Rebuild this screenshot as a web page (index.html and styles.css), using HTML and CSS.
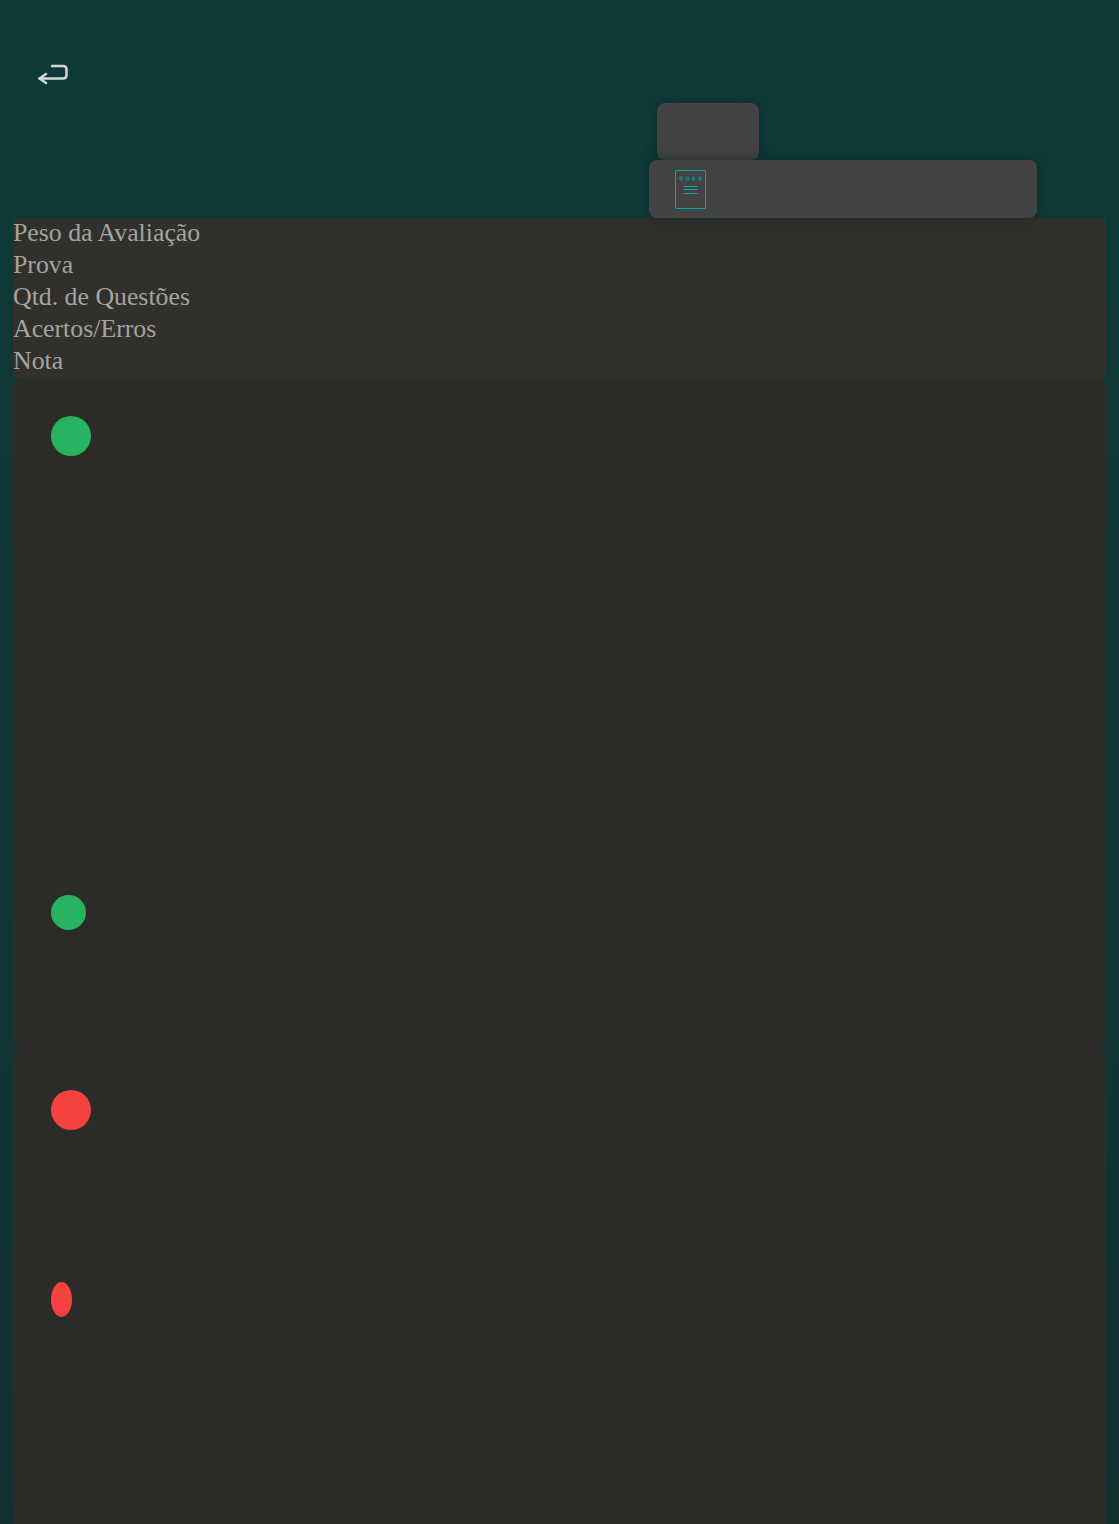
FILE: index.html
```html
<!DOCTYPE html>
<html lang="pt">
<head>
<meta charset="utf-8">
<title>Notas</title>
<link rel="stylesheet" href="styles.css">
</head>
<body>
<main class="page">
  <header class="top">
    <button class="back" aria-label="Voltar">
      <svg width="32" height="24" viewBox="0 0 32 24" fill="none" stroke="#d4d8d8" stroke-width="2.5" stroke-linecap="round" stroke-linejoin="round">
        <path d="M15 4H26C28.2 4 29.5 5.3 29.5 7.5V13C29.5 15.2 28.2 16.5 26 16.5H2.5"/>
        <path d="M9 12L2.5 16.5L9 21"/>
      </svg>
    </button>
    <div class="tabs">
      <div class="tab-small"></div>
      <div class="tab-wide">
        <svg width="31" height="39" viewBox="0 0 31 39" fill="none" stroke="#05a8ab" stroke-width="1">
          <rect x="0.5" y="0.5" width="30" height="38" rx="0.5"/>
          <ellipse cx="6" cy="8.5" rx="1.3" ry="1.6"/>
          <ellipse cx="12.5" cy="8.5" rx="1.3" ry="1.6"/>
          <ellipse cx="18.5" cy="8.5" rx="1.3" ry="1.6"/>
          <ellipse cx="25" cy="8.5" rx="1.3" ry="1.6"/>
          <path d="M8.5 16.5H22.5M8.5 19.5H22.5M8.5 23.5H22.5"/>
        </svg>
      </div>
    </div>
  </header>
  <section class="table-head">
    <div>Peso da Avaliação</div>
    <div>Prova</div>
    <div>Qtd. de Questões</div>
    <div>Acertos/Erros</div>
    <div>Nota</div>
  </section>
  <section class="card card-first">
    <span class="dot green dot-lg"></span>
    <span class="dot green dot-md gap-a"></span>
  </section>
  <section class="card card-second">
    <span class="dot red dot-lg"></span>
    <span class="dot red dot-narrow gap-b"></span>
  </section>
</main>
</body>
</html>
```
FILE: styles.css
```css
* { box-sizing: border-box; }
html, body { margin: 0; height: 1524px; overflow: hidden; }
body {
  background: linear-gradient(180deg, #0e3a3a 0%, #13302f 100%);
  font-family: "Liberation Serif", "Times New Roman", serif;
}
.page { padding: 0 13px; height: 1524px; overflow: hidden; }
.top { height: 218px; display: flex; position: relative; }
.back {
  width: 32px; height: 24px; margin: 62px 0 0 24px; padding: 0;
  background: none; border: 0; display: block;
}
.tabs {
  margin-left: auto; margin-right: 69px; width: 388px; padding-top: 103px;
  display: flex; flex-direction: column; align-items: flex-start;
}
.tab-small, .tab-wide {
  background: #434343; border-radius: 8px;
  box-shadow: 0 0 12px rgba(10, 35, 35, .6);
}
.tab-small { width: 102px; height: 57px; margin-left: 8px; }
.tab-wide {
  width: 388px; height: 58px; padding: 10px 0 0 26px; position: relative;
}
.table-head {
  height: 159px; background: #31302c; color: #a4a4a0;
  font-size: 25.8px; line-height: 32px;
}
.table-head div { height: 32px; position: relative; top: -1px; }
.card {
  background: #2b2b27; border-radius: 12px;
  padding: 39px 38px 0; display: flex; flex-direction: column; align-items: flex-start;
}
.card-first { height: 673px; }
.card-second { height: 600px; padding-top: 40px; }
.dot { display: block; border-radius: 50%; flex: none; }
.green { background: #28b360; }
.red { background: #f64141; }
.dot-lg { width: 40px; height: 40px; }
.dot-md { width: 35px; height: 35px; }
.dot-narrow { width: 21px; height: 35px; }
.gap-a { margin-top: 439px; }
.gap-b { margin-top: 152px; }
```
